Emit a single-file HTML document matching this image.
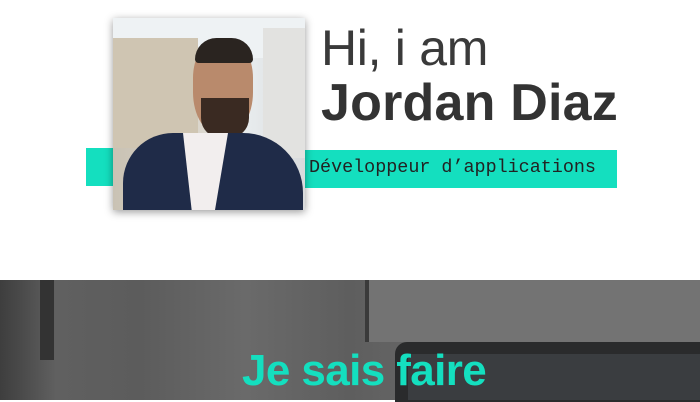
<!DOCTYPE html>
<html><head><meta charset="utf-8"><style>
body{margin:0;width:700px;height:400px;overflow:hidden;background:#fff;position:relative;font-family:"Liberation Sans",sans-serif}
.abs{position:absolute}
</style></head><body>
<div class="abs" style="left:86px;top:148px;width:30px;height:38px;background:#14dfbf"></div>
<div class="abs" style="left:300px;top:150px;width:317px;height:38px;background:#14dfbf"></div>
<div class="abs" style="left:309px;top:157px;font-family:'Liberation Mono',monospace;font-size:18.4px;color:#222">Développeur d’applications</div>
<div class="abs" style="left:113px;top:18px;width:192px;height:192px;box-shadow:0 2px 8px rgba(0,0,0,.4);overflow:hidden;background:linear-gradient(90deg,#c9c2b4 0%,#d8d2c6 40%,#e8ecee 70%,#d8dadc 100%)">
 <div class="abs" style="left:0;top:0;width:192px;height:40px;background:#eef2f4"></div>
 <div class="abs" style="left:0;top:20px;width:85px;height:110px;background:#cfc5b2"></div>
 <div class="abs" style="left:150px;top:10px;width:42px;height:130px;background:#e2e2e0"></div>
 <div class="abs" style="left:80px;top:22px;width:60px;height:95px;border-radius:40% 40% 45% 45%;background:#b98a6c"></div>
 <div class="abs" style="left:82px;top:20px;width:58px;height:25px;border-radius:30px 30px 5px 5px;background:#2a2420"></div>
 <div class="abs" style="left:88px;top:80px;width:48px;height:40px;border-radius:0 0 20px 20px;background:#3a2a22"></div>
 <div class="abs" style="left:10px;top:115px;width:180px;height:90px;border-radius:50px 60px 0 0;background:#1f2b48"></div>
 <div class="abs" style="left:70px;top:115px;width:45px;height:80px;background:#f2eeee;clip-path:polygon(0 0,100% 0,70% 100%,20% 100%)"></div>
</div>
<div class="abs" style="left:321px;top:19px;font-size:50px;color:#3a3a3a;letter-spacing:-0.3px">Hi, i am</div>
<div class="abs" style="left:321px;top:73px;font-size:52px;font-weight:bold;color:#333;letter-spacing:0.2px">Jordan Diaz</div>
<div class="abs" style="left:0;top:280px;width:700px;height:120px;background:linear-gradient(90deg,#3e3e3e 0%,#4a4a4a 3%,#606060 8%,#5c5c5c 20%,#6a6a6a 35%,#5e5e5e 50%,#666 60%,#6d6d6d 100%)">
 <div class="abs" style="left:365px;top:0;width:335px;height:62px;background:#737373;border-left:4px solid #3a3a3a"></div>
 <div class="abs" style="left:395px;top:62px;width:305px;height:60px;border-radius:12px 0 0 0;background:#2a2b2c"></div>
 <div class="abs" style="left:408px;top:74px;width:292px;height:46px;background:#3a3d40"></div>
 <div class="abs" style="left:40px;top:0;width:14px;height:80px;background:#333"></div>
</div>
<div class="abs" style="left:242px;top:346px;font-size:44px;font-weight:bold;color:#14dfbf;letter-spacing:-0.6px">Je sais faire</div>
</body></html>
